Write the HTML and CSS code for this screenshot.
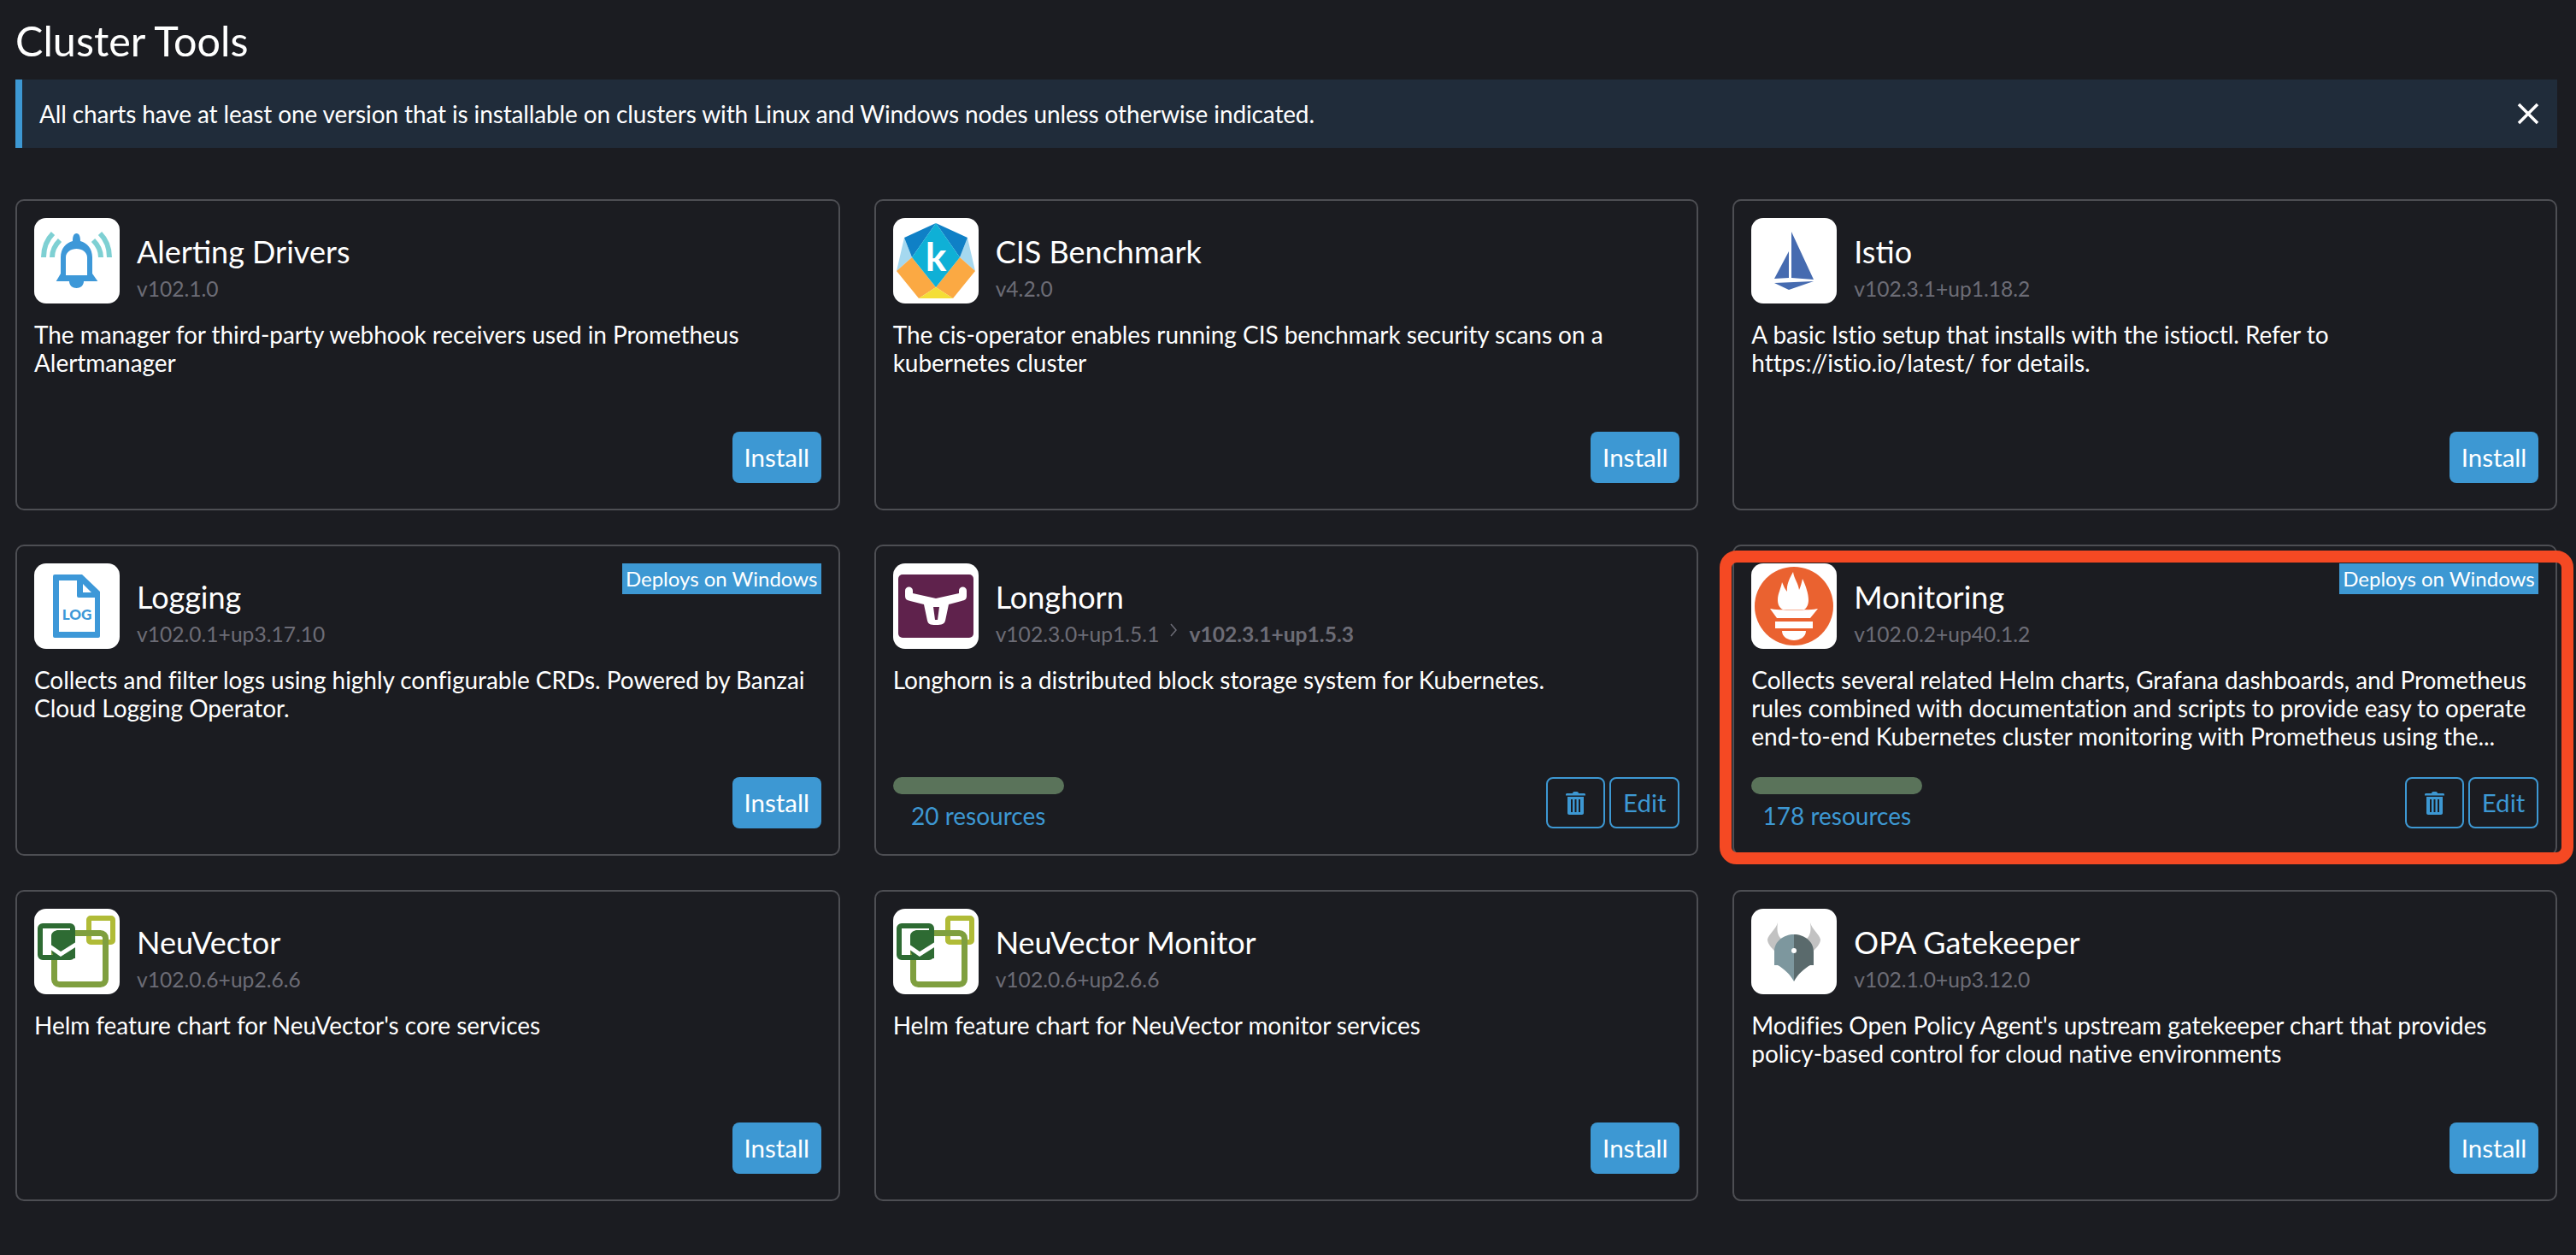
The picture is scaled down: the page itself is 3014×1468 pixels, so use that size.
FILE: index.html
```html
<!DOCTYPE html>
<html lang="en">
<head>
<meta charset="utf-8">
<title>Cluster Tools</title>
<link rel="stylesheet" href="styles.css">
</head>
<body>
<main class="page">
  <h1 class="page-title">Cluster Tools</h1>
  <div class="banner">
    <span>All charts have at least one version that is installable on clusters with Linux and Windows nodes unless otherwise indicated.</span>
    <svg class="banner-close" viewBox="0 0 26 26"><path d="M2 2 24 24M24 2 2 24"/></svg>
  </div>
  <section class="grid">

    <article class="card">
      <header class="card-head">
        <div class="logo"><svg viewBox="0 0 100 100">
          <g class="wave"><path d="M11 46Q11 29 22 18"/><path d="M21 46Q21 35 30 26"/><path d="M88 46Q88 29 77 18"/><path d="M78 46Q78 35 69 26"/></g>
          <path class="bell" fill-rule="evenodd" d="M25.7 74 31 65V46C31 36 37 29 45 27 45 22 46 18 49.5 18S54 22 54 27C62 29 68 36 68 46V65L74.3 74H58C58 79 54 82 49.5 82S41 79 41 74ZM37 67H62V46C62 40 56 36 49.5 36S37 40 37 46Z"/>
        </svg></div>
        <div class="head-text"><h2 class="card-title">Alerting Drivers</h2><div class="version">v102.1.0</div></div>
      </header>
      <p class="desc">The manager for third-party webhook receivers used in Prometheus Alertmanager</p>
      <footer class="card-foot"><span></span><div class="actions"><button class="btn primary">Install</button></div></footer>
    </article>

    <article class="card">
      <header class="card-head">
        <div class="logo"><svg viewBox="0 0 100 100">
          <path fill="#a5d8ef" d="M13 23 4 62 22 46ZM87 23 96 62 78 46Z"/>
          <path fill="#0f80c6" d="M50 6 13 23 22 46ZM50 6 87 23 78 46Z"/>
          <path fill="#fba943" d="M4 62 22 46 50 81 30 94ZM96 62 78 46 50 81 70 94Z"/>
          <path fill="#f4de37" d="M50 81 70 94H30Z"/>
          <path fill="#0fb0d6" d="M50 6 78 46 50 81 22 46Z"/>
          <text class="logo-k" x="50" y="62" text-anchor="middle">k</text>
        </svg></div>
        <div class="head-text"><h2 class="card-title">CIS Benchmark</h2><div class="version">v4.2.0</div></div>
      </header>
      <p class="desc">The cis-operator enables running CIS benchmark security scans on a kubernetes cluster</p>
      <footer class="card-foot"><span></span><div class="actions"><button class="btn primary">Install</button></div></footer>
    </article>

    <article class="card">
      <header class="card-head">
        <div class="logo"><svg viewBox="0 0 100 100">
          <path fill="#466bb0" d="M47 16 73 72 47 70ZM44 39V70L27 71ZM27 76 73 74 44 84Z"/>
        </svg></div>
        <div class="head-text"><h2 class="card-title">Istio</h2><div class="version">v102.3.1+up1.18.2</div></div>
      </header>
      <p class="desc">A basic Istio setup that installs with the istioctl. Refer to https://istio.io/latest/ for details.</p>
      <footer class="card-foot"><span></span><div class="actions"><button class="btn primary">Install</button></div></footer>
    </article>

    <article class="card">
      <span class="badge">Deploys on Windows</span>
      <header class="card-head">
        <div class="logo"><svg viewBox="0 0 100 100">
          <path fill="#3d98d8" fill-rule="evenodd" d="M24 13H56L77 33V85Q77 87 75 87H24Q22 87 22 85V15Q22 13 24 13ZM29 20V80H71V40H52Q50 40 50 38V20ZM57 24V34H67Z"/>
          <text class="logo-log" x="50" y="66" text-anchor="middle">LOG</text>
        </svg></div>
        <div class="head-text"><h2 class="card-title">Logging</h2><div class="version">v102.0.1+up3.17.10</div></div>
      </header>
      <p class="desc">Collects and filter logs using highly configurable CRDs. Powered by Banzai Cloud Logging Operator.</p>
      <footer class="card-foot"><span></span><div class="actions"><button class="btn primary">Install</button></div></footer>
    </article>

    <article class="card">
      <header class="card-head">
        <div class="logo"><svg viewBox="0 0 100 100">
          <rect x="6" y="13" width="88" height="74" rx="5" fill="#5f224c"/>
          <path fill="#fff" fill-rule="evenodd" d="M14 32C14 26 23 26 23 32V35L50 41 77 35V32C77 26 86 26 86 32V38C86 42 84 43 80 44L65 48 61 67C60 71 57 72 50 72S41 71 40 67L36 48 20 44C16 43 14 42 14 38ZM47 51 49 66H52L54 51Z"/>
        </svg></div>
        <div class="head-text"><h2 class="card-title">Longhorn</h2>
          <div class="version">v102.3.0+up1.5.1<svg class="ver-arrow" viewBox="0 0 10 18"><path d="M2 1 8 8 2 15"/></svg><b>v102.3.1+up1.5.3</b></div></div>
      </header>
      <p class="desc">Longhorn is a distributed block storage system for Kubernetes.</p>
      <footer class="card-foot">
        <div class="status"><div class="bar"></div><a class="res">20 resources</a></div>
        <div class="actions">
          <button class="btn outline icon-btn"><svg class="trash" viewBox="0 0 23 27"><path fill-rule="evenodd" d="M8 2C8 .8 9 0 10 0H13C14 0 15 .8 15 2H21.500C22.400 2 23 2.600 23 3.500V4.500H0V3.500C0 2.600.6 2 1.500 2ZM2 6H21V25C21 26.200 20.200 27 19 27H4C2.800 27 2 26.200 2 25ZM6 9V24H8V9ZM10.500 9V24H12.500V9ZM15 9V24H17V9Z"/></svg></button>
          <button class="btn outline">Edit</button>
        </div>
      </footer>
    </article>

    <article class="card">
      <span class="badge">Deploys on Windows</span>
      <div class="highlight"></div>
      <header class="card-head">
        <div class="logo"><svg viewBox="0 0 100 100">
          <circle cx="50" cy="50" r="46" fill="#ea6230"/>
          <path fill="#fff" d="M49 10C50 18 55 23 56 31 58 27 59 22 60 18 64 27 67 35 67 43 67 48 65 52 62 54H37C33 52 31 48 31 43 31 35 35 29 36 22 38 26 39 30 42 33 41 25 45 17 49 10Z"/>
          <path fill="#fff" d="M22 53C30 55 70 55 78 53L69 64H30ZM28 68H72V76H28ZM36 79H64C64 86 57 90 50 90S36 86 36 79Z"/>
        </svg></div>
        <div class="head-text"><h2 class="card-title">Monitoring</h2><div class="version">v102.0.2+up40.1.2</div></div>
      </header>
      <p class="desc">Collects several related Helm charts, Grafana dashboards, and Prometheus rules combined with documentation and scripts to provide easy to operate end-to-end Kubernetes cluster monitoring with Prometheus using the...</p>
      <footer class="card-foot">
        <div class="status"><div class="bar"></div><a class="res">178 resources</a></div>
        <div class="actions">
          <button class="btn outline icon-btn"><svg class="trash" viewBox="0 0 23 27"><path fill-rule="evenodd" d="M8 2C8 .8 9 0 10 0H13C14 0 15 .8 15 2H21.500C22.400 2 23 2.600 23 3.500V4.500H0V3.500C0 2.600.6 2 1.500 2ZM2 6H21V25C21 26.200 20.200 27 19 27H4C2.800 27 2 26.200 2 25ZM6 9V24H8V9ZM10.500 9V24H12.500V9ZM15 9V24H17V9Z"/></svg></button>
          <button class="btn outline">Edit</button>
        </div>
      </footer>
    </article>

    <article class="card">
      <header class="card-head">
        <div class="logo"><svg viewBox="0 0 100 100">
          <rect x="64" y="11" width="28" height="28" rx="2" fill="none" stroke="#b0bb37" stroke-width="6"/>
          <rect x="23.500" y="28.500" width="60" height="60" rx="6" fill="none" stroke="#7f9f3f" stroke-width="7"/>
          <rect x="7" y="20" width="38" height="37" rx="3" fill="none" stroke="#2e6b33" stroke-width="6"/>
          <path fill="#2e6b33" d="M27 25H48V58H26C22 56 20 50 20 44V32C20 28 23 26 27 25Z"/>
          <path fill="none" stroke="#fff" stroke-width="5" d="M18 44 31 53 50 41"/>
        </svg></div>
        <div class="head-text"><h2 class="card-title">NeuVector</h2><div class="version">v102.0.6+up2.6.6</div></div>
      </header>
      <p class="desc">Helm feature chart for NeuVector's core services</p>
      <footer class="card-foot"><span></span><div class="actions"><button class="btn primary">Install</button></div></footer>
    </article>

    <article class="card">
      <header class="card-head">
        <div class="logo"><svg viewBox="0 0 100 100">
          <rect x="64" y="11" width="28" height="28" rx="2" fill="none" stroke="#b0bb37" stroke-width="6"/>
          <rect x="23.500" y="28.500" width="60" height="60" rx="6" fill="none" stroke="#7f9f3f" stroke-width="7"/>
          <rect x="7" y="20" width="38" height="37" rx="3" fill="none" stroke="#2e6b33" stroke-width="6"/>
          <path fill="#2e6b33" d="M27 25H48V58H26C22 56 20 50 20 44V32C20 28 23 26 27 25Z"/>
          <path fill="none" stroke="#fff" stroke-width="5" d="M18 44 31 53 50 41"/>
        </svg></div>
        <div class="head-text"><h2 class="card-title">NeuVector Monitor</h2><div class="version">v102.0.6+up2.6.6</div></div>
      </header>
      <p class="desc">Helm feature chart for NeuVector monitor services</p>
      <footer class="card-foot"><span></span><div class="actions"><button class="btn primary">Install</button></div></footer>
    </article>

    <article class="card">
      <header class="card-head">
        <div class="logo"><svg viewBox="0 0 100 100">
          <path fill="#c2c2c2" d="M31 16C29 24 20 30 19 36 19 41 24 46 28 50L36 36C30 31 30 24 31 16ZM69 16C71 24 80 30 81 36 81 41 76 46 72 50L64 36C70 31 70 24 69 16Z"/>
          <path fill="#7d979e" d="M50 30C38 30 27 38 27 50V66H31C38 70 45 76 50 85Z"/>
          <path fill="#5a6a6c" d="M50 30C62 30 73 38 73 50V66H69C62 70 55 76 50 85Z"/>
          <circle cx="50" cy="49" r="3" fill="#fff"/>
        </svg></div>
        <div class="head-text"><h2 class="card-title">OPA Gatekeeper</h2><div class="version">v102.1.0+up3.12.0</div></div>
      </header>
      <p class="desc">Modifies Open Policy Agent's upstream gatekeeper chart that provides policy-based control for cloud native environments</p>
      <footer class="card-foot"><span></span><div class="actions"><button class="btn primary">Install</button></div></footer>
    </article>

  </section>
</main>
</body>
</html>
```
FILE: styles.css
```css
* { box-sizing: border-box; }
html, body { margin: 0; height: 100%; }
body {
  background: #1b1c21;
  color: #fff;
  font-family: Lato, "Noto Sans", sans-serif;
  font-size: 28px;
  line-height: 33px;
}
.page { padding: 0 22px 0 18px; }
.page-title {
  margin: 0;
  height: 93px;
  font-size: 48.500px;
  font-weight: 400;
  line-height: 94px;
}
.banner {
  display: flex;
  align-items: center;
  justify-content: space-between;
  height: 80px;
  margin-bottom: 60px;
  padding: 0 21px 0 20px;
  background: #202c3a;
  border-left: 8px solid #3d98d3;
  letter-spacing: -0.13px;
}
.banner-close { width: 26px; height: 26px; fill: none; stroke: #fff; stroke-width: 3.500; }
.grid {
  display: grid;
  grid-template-columns: repeat(3, 1fr);
  grid-auto-rows: 364px;
  gap: 40px;
}
.card {
  position: relative;
  display: flex;
  flex-direction: column;
  padding: 20px 20px 30px;
  border: 2px solid #4d4e53;
  border-radius: 10px;
}
.card-head { display: flex; align-items: flex-start; gap: 20px; }
.head-text { padding-top: 17px; }
.logo {
  flex: none;
  width: 100px;
  height: 100px;
  background: #fff;
  border-radius: 14px;
}
.logo svg { display: block; width: 100px; height: 100px; }
.wave path { fill: none; stroke: #7ed0d3; stroke-width: 6; }
.bell { fill: #3d98d8; }
.logo-k { font-family: Lato, sans-serif; font-weight: 700; font-size: 46px; fill: #fff; }
.logo-log { font-family: Lato, sans-serif; font-weight: 900; font-size: 17px; fill: #3d98d8; }
.card-title { margin: 0; font-size: 36px; font-weight: 400; line-height: 44px; }
.version { display: flex; align-items: center; font-size: 24.600px; line-height: 30px; color: #6c6c76; margin-top: 7px; }
.version b { font-weight: 700; }
.ver-arrow { width: 10px; height: 18px; margin: 0 13px 8px 12px; fill: none; stroke: #6c6c76; stroke-width: 1.500; }
.desc { margin: 20px 0 0; letter-spacing: -0.05px; }
.card-foot {
  margin-top: auto;
  display: flex;
  justify-content: space-between;
  align-items: flex-start;
}
.actions { display: flex; gap: 5px; }
.btn {
  height: 60px;
  padding: 0 10px;
  border-radius: 8px;
  font-family: inherit;
  font-size: 29.500px;
  line-height: 1;
  display: flex;
  align-items: center;
  justify-content: center;
}
.primary { background: #3d98d3; border: 0; color: #fff; width: 104px; }
.outline { background: transparent; border: 2px solid #3d98d3; color: #3d98d3; width: 82px; }
.icon-btn { width: 69px; }
.trash { flex: none; width: 23px; height: 27px; fill: #3d98d3; }
.status { width: 200px; height: 60px; }
.bar { height: 20px; border-radius: 10px; background: #5a735a; }
.res { display: block; margin-top: 9px; text-align: center; color: #3d98d3; }
.badge {
  position: absolute;
  top: 20px;
  right: 20px;
  width: 233px;
  height: 36px;
  background: #3d98d3;
  color: #fff;
  font-size: 24px;
  line-height: 36px;
  text-align: center;
  white-space: nowrap;
}
.highlight {
  position: absolute;
  top: 5px;
  left: -17px;
  right: -21px;
  bottom: -12px;
  border: 14px solid #f54923;
  border-radius: 20px;
  pointer-events: none;
}
```
